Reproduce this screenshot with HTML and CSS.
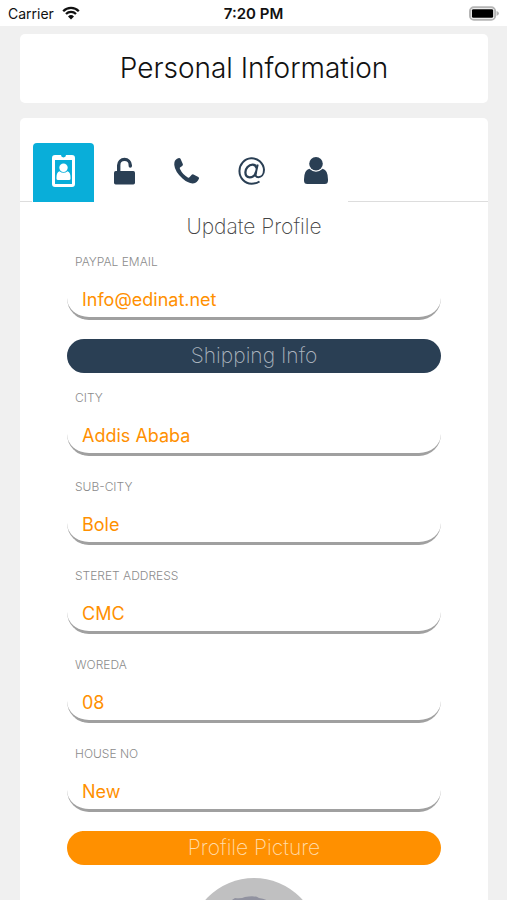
FILE: index.html
```
<!DOCTYPE html>
<html lang="en">
<head>
    <meta charset="UTF-8">
    <meta name="viewport" content="width=device-width, initial-scale=1.0">
    <title>Personal Information</title>
    <link rel="stylesheet" href="styles.css">
</head>
<body>
    <header class="status-bar">
        <div class="carrier">
            <span>Carrier</span>
            <svg class="wifi" viewBox="0 0 18 14" aria-hidden="true">
                <path d="M1.2 5.2a11 11 0 0 1 15.6 0M4 8a7.100 7.100 0 0 1 10 0" fill="none" stroke="currentColor" stroke-width="2.300"/>
                <path d="M9 13.600 6 10.500a4.300 4.300 0 0 1 6 0z" fill="currentColor"/>
            </svg>
        </div>
        <time class="clock">7:20 PM</time>
        <div class="battery">
            <svg viewBox="0 0 31 15" aria-hidden="true">
                <rect x="1" y="1" width="26" height="13" rx="4" fill="#fff" stroke="#b5b5b5" stroke-width="2"/>
                <path d="M28.500 5q2.500 1 2.500 2.500t-2.500 2.500z" fill="#b5b5b5"/>
                <rect x="3" y="3" width="22" height="9" rx="1.500" fill="#000"/>
            </svg>
        </div>
    </header>

    <main class="container">
        <section class="card title-card">
            <h1>Personal Information</h1>
        </section>

        <section class="card profile-card">
            <nav class="tabs">
                <button class="tab active" type="button" aria-label="Profile">
                    <svg class="icon-badge" viewBox="0 0 23 32">
                        <path d="M3 0h6a2.500 2.500 0 0 0 5 0h6q3 0 3 3v26q0 3-3 3H3q-3 0-3-3V3q0-3 3-3zm0 5v24h17V5z" fill-rule="evenodd"/>
                        <circle cx="11.500" cy="12.800" r="4.200"/>
                        <path d="M7.500 16.200q4 3 8 0 3 1 3 6v1.500q0 1.300-1.500 1.300H6q-1.500 0-1.500-1.300v-1.500q0-5 3-6z"/>
                    </svg>
                </button>
                <button class="tab" type="button" aria-label="Security">
                    <svg class="icon-lock" viewBox="0 0 21 28">
                        <rect y="14" width="21" height="13.500" rx="1.700"/>
                        <path d="M4.700 15V8.200a5.700 5.700 0 0 1 11.600 0V9" fill="none" stroke="currentColor" stroke-width="3.400" stroke-linecap="round"/>
                    </svg>
                </button>
                <button class="tab" type="button" aria-label="Phone">
                    <svg class="icon-phone" viewBox="0 0 25 26">
                        <path d="M3 .7Q5.500-.5 6.500.7l2.300 5.200q.4 1.200-.6 2L6 9.500q-.4.700 0 1.600 2.600 5.500 7.800 8.400 1 .5 1.700-.2l2.200-2.500q.8-.8 1.800-.3l4.800 2.600q1 .6.600 1.700-1.500 4.200-5.900 4.600-5 .2-10.500-4.800Q.8 13.400.3 7 0 2.300 3 .7z"/>
                    </svg>
                </button>
                <button class="tab" type="button" aria-label="Email">
                    <svg class="icon-at" viewBox="0 0 27 28">
                        <path d="M21.500 24.500Q18 26.700 13.500 26.700A12.300 12.700 0 1 1 26 12.800C26 18 23 20.200 20.300 20.200c-2.600 0-3-1.700-2.600-3.700L19.700 7.500" fill="none" stroke="currentColor" stroke-width="2"/>
                        <path d="M18.600 11.300c-.6-2.500-2-3.700-4-3.700-3.900 0-7.200 3.600-7.200 7.700 0 3.100 1.700 5 4.300 5 3.300 0 5.700-2.700 6.400-5.600" fill="none" stroke="currentColor" stroke-width="2.300"/>
                    </svg>
                </button>
                <button class="tab" type="button" aria-label="Account">
                    <svg class="icon-user" viewBox="0 0 24 27">
                        <circle cx="12" cy="6.800" r="6.800"/>
                        <path d="M5.300 11.700q6.700 6 13.400 0 5.300 1.300 5.300 10.800v1q0 3.500-3.300 3.500H3.300Q0 27 0 23.500v-1Q0 13 5.300 11.700z"/>
                    </svg>
                </button>
            </nav>

            <form class="profile-form">
                <h2>Update Profile</h2>

                <div class="field">
                    <label for="paypal-email">PAYPAL EMAIL</label>
                    <input id="paypal-email" type="text" value="Info@edinat.net">
                </div>

                <h3 class="section-title">Shipping Info</h3>

                <div class="field">
                    <label for="city">CITY</label>
                    <input id="city" type="text" value="Addis Ababa">
                </div>
                <div class="field">
                    <label for="sub-city">SUB-CITY</label>
                    <input id="sub-city" type="text" value="Bole">
                </div>
                <div class="field">
                    <label for="street">STERET ADDRESS</label>
                    <input id="street" type="text" value="CMC">
                </div>
                <div class="field">
                    <label for="woreda">WOREDA</label>
                    <input id="woreda" type="text" value="08">
                </div>
                <div class="field">
                    <label for="house-no">HOUSE NO</label>
                    <input id="house-no" type="text" value="New">
                </div>

                <h3 class="section-title picture">Profile Picture</h3>

                <svg class="avatar" viewBox="0 0 130 130" role="img" aria-label="Profile picture">
                    <clipPath id="round"><circle cx="65" cy="65" r="65"/></clipPath>
                    <g clip-path="url(#round)">
                        <rect width="130" height="130" fill="#c0c0c1"/>
                        <path d="M34 45Q36 25 46 20q6 1 10-1 10-2 14 1 18 2 24 26l-5 22q-24 26-50 0z" fill="#9192a0"/>
                        <path d="M12 130q4-38 53-40 49 2 53 40z" fill="#9192a0"/>
                    </g>
                </svg>
            </form>
        </section>
    </main>
</body>
</html>
```

FILE: styles.css
```
:root {
    --bg: #f0f0f0;
    --navy: #2a3f54;
    --blue: #09aed9;
    --orange: #ff9000;
    --line: #dddddd;
    --muted: #8c8c8c;
}

* {
    margin: 0;
    padding: 0;
    box-sizing: border-box;
}

body {
    font-family: 'Inter', 'Liberation Sans', sans-serif;
    background-color: var(--bg);
    color: #111;
    height: 100vh;
    display: flex;
    flex-direction: column;
    overflow: hidden;
}

.status-bar {
    flex: none;
    display: grid;
    grid-template-columns: 1fr auto 1fr;
    align-items: center;
    height: 26px;
    padding: 0 8px;
    background-color: #fff;
    font-size: 14px;
}

.carrier {
    display: flex;
    align-items: center;
    gap: 8px;
}

.wifi {
    width: 18px;
    height: 14px;
}

.clock {
    font-size: 15px;
    font-weight: 600;
}

.battery {
    display: flex;
    justify-content: flex-end;
}

.battery svg {
    width: 30px;
    height: 15px;
}

.container {
    flex: 1;
    min-height: 0;
    padding: 8px 19px 0 20px;
    overflow: hidden;
}

.card {
    background-color: #fff;
    border-radius: 5px;
}

.title-card {
    margin-bottom: 15px;
    padding: 14px;
    text-align: center;
}

h1 {
    font-size: 28px;
    font-weight: 300;
    line-height: 41px;
}

.profile-card {
    padding-top: 25px;
}

.tabs {
    display: flex;
    gap: 1px;
}

/* rule on both sides of the tab row */
.tabs::before,
.tabs::after {
    content: "";
    width: 12px;
    border-bottom: 1px solid var(--line);
}

.tabs::after {
    flex: 1;
}

.tab {
    display: flex;
    align-items: center;
    justify-content: center;
    height: 59px;
    padding: 0 19px 4px;
    border: none;
    border-radius: 4px 4px 0 0;
    background: none;
    color: var(--navy);
    cursor: pointer;
}

.tab.active {
    background-color: var(--blue);
    color: #fff;
}

.tab svg {
    fill: currentColor;
}

.icon-badge {
    width: 23px;
    height: 32px;
}

.icon-lock {
    width: 21px;
    height: 28px;
}

.icon-phone {
    width: 25px;
    height: 26px;
}

.icon-at {
    width: 27px;
    height: 28px;
}

.icon-user {
    width: 24px;
    height: 27px;
}

.profile-form {
    padding: 8px 47px 0;
}

h2 {
    font-size: 21px;
    font-weight: 200;
    line-height: 34px;
    margin-bottom: 6px;
    text-align: center;
    color: #444;
}

.field {
    margin-bottom: 19px;
}

.field label {
    display: block;
    padding-left: 8px;
    font-size: 12px;
    font-weight: 300;
    line-height: 24px;
    color: var(--muted);
}

.field input {
    display: block;
    width: 100%;
    height: 46px;
    padding: 8px 15px 0;
    border: 0 solid transparent;
    border-bottom: 3px solid #a0a0a0;
    border-radius: 22px;
    outline: none;
    background-color: #fff;
    color: var(--orange);
    font-family: inherit;
    font-size: 18px;
}

.section-title {
    margin-bottom: 13px;
    border-radius: 17px;
    background-color: var(--navy);
    color: #aab4be;
    font-size: 21px;
    font-weight: 200;
    line-height: 34px;
    text-align: center;
}

.section-title.picture {
    background-color: var(--orange);
    color: #ffdcaa;
}

.avatar {
    display: block;
    width: 130px;
    height: 130px;
    margin: 0 auto;
}
```
